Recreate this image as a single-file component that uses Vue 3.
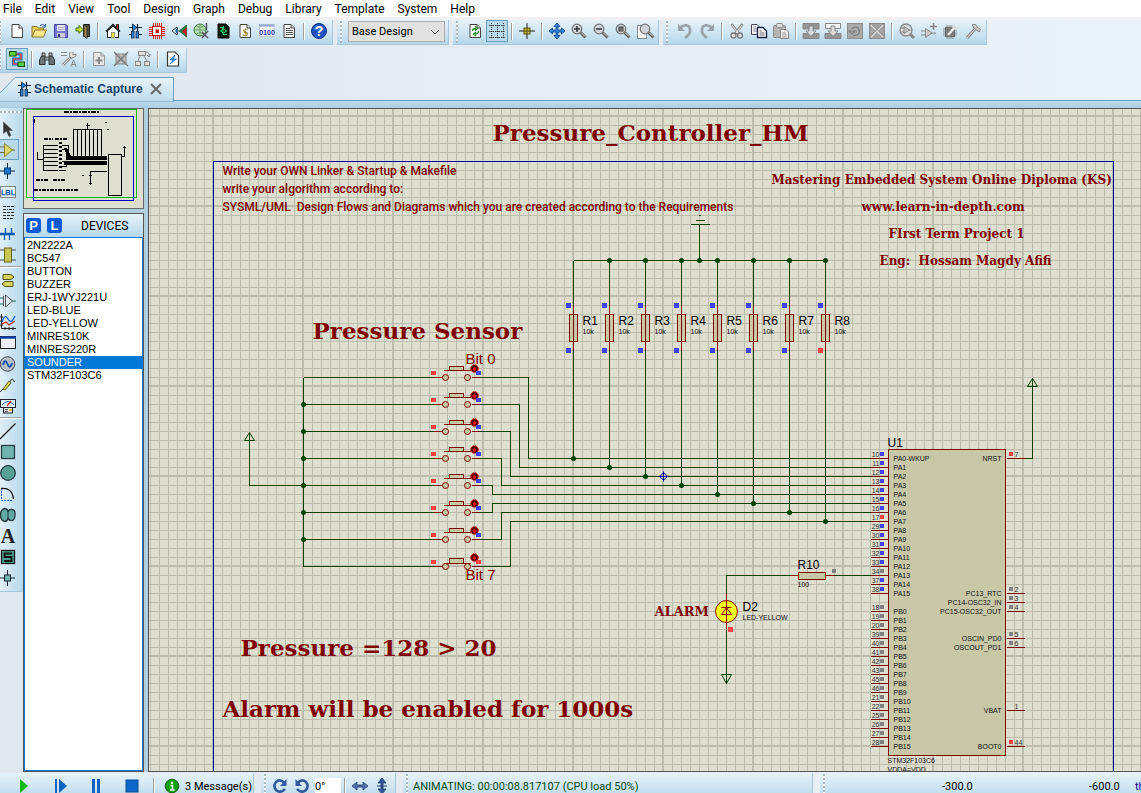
<script setup>
import { ref } from 'vue'

const menus = ['File', 'Edit', 'View', 'Tool', 'Design', 'Graph', 'Debug', 'Library', 'Template', 'System', 'Help']

const page = '<path d="M3 1.500H10L13.500 5V14.500H3Z" fill="#fdfdfd" stroke="#444"/><path d="M10 1.500V5H13.500" fill="#ddd" stroke="#444"/>'
const greyPage = '<path d="M2.500 1.500H10L13.500 5V14.500H2.500Z" fill="#e6e6e6" stroke="#999"/><path d="M10 1.500V5H13.500" fill="none" stroke="#999"/>'
const lens = '<path d="M9.500 9.500L14.500 14.500" stroke="#666" stroke-width="3"/><path d="M10 9.500L14 13.500" stroke="#ccc"/><circle cx="6" cy="6" r="4.800" fill="#cfd5da" stroke="#777" stroke-width="1.300"/>'
const parts = '<path d="M2 4.500H15M2 11.500H5M11 11.500H15" stroke="#123"/><path d="M5.500 1V8L10 4.500Z" fill="#1d7fd8" stroke="#123" stroke-width=".8"/><path d="M10.500 1V8" stroke="#123" stroke-width="1.200"/><rect x="4.500" y="8.500" width="2.500" height="6.500" fill="#2f86dc" stroke="#124" stroke-width=".8"/><rect x="9" y="8.500" width="2.500" height="6.500" fill="#2f86dc" stroke="#124" stroke-width=".8"/>'

const icons = {
  page,
  open: '<path d="M1 14V3.500H6L7 5H12.500V7" fill="#f2d35c" stroke="#8a7430"/><path d="M1 14L4 7H15.500L12.500 14Z" fill="#fbe78b" stroke="#8a7430"/><path d="M9 2.500Q12 0 14 3M14.500 1V4H11.500" fill="none" stroke="#2c5fa0"/>',
  save: '<path d="M1.500 1.500H13L14.500 3V14.500H1.500Z" fill="#7478d4" stroke="#45459a"/><rect x="4" y="2" width="8" height="6" fill="#dfe3f2"/><path d="M5 4.500H11M5 6.500H11" stroke="#aab"/><rect x="4" y="10" width="8" height="4.500" fill="#c9cbd8"/><rect x="5" y="11" width="2" height="3" fill="#35357d"/>',
  exit: '<path d="M8.500 1.500H14.500V13.500H8.500Z" fill="#4b4b3a" stroke="#222"/><path d="M9 2L12 4V15.500L9 13Z" fill="#a8894c" stroke="#333"/><path d="M1 5H4V2.500L8 6.500L4 10.500V8H1Z" fill="#c8e830" stroke="#3f6a10"/>',
  home: '<path d="M2.500 8V14.500H13.500V8L8 3Z" fill="#fff" stroke="#111"/><path d="M1 8.500L8 1.500L15 8.500" fill="none" stroke="#111" stroke-width="1.500"/><path d="M11.500 4V1.500H13.500V6" fill="#e33" stroke="#111"/><rect x="6.500" y="9.500" width="3" height="5" fill="#ffe640" stroke="#997"/>',
  parts,
  chip: '<path d="M4.500 0V3M6.500 0V3M8.500 0V3M10.500 0V3M12.500 0V3M4.500 13V16M6.500 13V16M8.500 13V16M10.500 13V16M12.500 13V16M0 4.500H3M0 6.500H3M0 8.500H3M0 10.500H3M0 12.500H3M13 4.500H16M13 6.500H16M13 8.500H16M13 10.500H16M13 12.500H16" stroke="#e02020"/><rect x="3.500" y="3.500" width="9" height="9" fill="#fff" stroke="#c00000"/><rect x="6.500" y="6.500" width="3.500" height="3.500" fill="#d01010"/>',
  eye: '<path d="M8 8L15.500 2V14Z" fill="#0b8a42" stroke="#104020" stroke-width=".6"/><path d="M11 8L15.500 4.500V13Z" fill="#c82020"/><path d="M1 8L6 4Q8 8 6 12Z" fill="#fff" stroke="#234"/><ellipse cx="5.500" cy="8" rx="1.200" ry="2.200" fill="#1768b0"/>',
  globe: '<circle cx="7" cy="7" r="6" fill="#b9dcae" stroke="#3c7a44"/><path d="M1 7H13M7 1V13M3 3Q7 6 11 3M3 11Q7 8 11 11" fill="none" stroke="#5a9a60" stroke-width=".8"/><path d="M9 9L15 15M15 8L9 15M13.500 0V7" stroke="#556" stroke-width="1.500"/>',
  board: '<path d="M3 1H11L14 4V15H3Z" fill="#021a08" stroke="#000"/><path d="M5 4.500H8V11.500H12M8.500 3V6M5 8H6.500M10.500 8H12" fill="none" stroke="#1fe070"/><circle cx="8.500" cy="8" r="2" fill="none" stroke="#1fe070"/>',
  dollar: page + '<text x="8.500" y="13" font-size="11" font-family="Liberation Serif" font-weight="700" text-anchor="middle" fill="#94831a">$</text>',
  code: '<rect x=".5" y="1.500" width="14.500" height="12" fill="#f4f6fb" stroke="#c0c8d8"/><path d="M0 2.500H15.500" stroke="#8fa3d8" stroke-width="2"/><text x="8" y="12" font-size="7" font-family="Liberation Sans" font-weight="700" text-anchor="middle" fill="#2a3cc8">0100</text>',
  doc: page + '<path d="M5 5.500H9M5 7.500H12M5 9.500H12M5 11.500H12" stroke="#555"/>',
  help: '<circle cx="8" cy="8" r="7.500" fill="#1e52c4" stroke="#0e2f80"/><path d="M2 6Q8 -1 14 6Q8 9 2 6Z" fill="#5a8ae6" opacity=".6"/><text x="8" y="13" font-size="14" font-family="Liberation Sans" font-weight="700" text-anchor="middle" fill="#fff">?</text>',
  refresh: page + '<path d="M5.500 8Q5.500 5.500 9 5.500M8 3.500L10.500 5.500L8 7.500M11.500 8Q11.500 11 8 11M9 9L6.500 11L9 13" fill="none" stroke="#159020" stroke-width="1.300"/>',
  grid: '<path d="M0 2.500H16M0 8.500H16M0 14.500H16M2.500 0V16M8.500 0V16M14.500 0V16" stroke="#333" stroke-dasharray="1 1"/><path d="M1.500 2.500H3.500M7.500 2.500H9.500M13.500 2.500H15.500M1.500 8.500H3.500M7.500 8.500H9.500M13.500 8.500H15.500M1.500 14.500H3.500M7.500 14.500H9.500M13.500 14.500H15.500" stroke="#222"/>',
  origin: '<path d="M8 0V16M0 8H16" stroke="#222"/><rect x="5" y="5" width="6" height="6" fill="#c8b840" stroke="#5c5210"/><path d="M8 4V12M4 8H12" stroke="#5c5210"/>',
  pan: '<path d="M8 0L11 3.500H9V7H12.500V5L16 8L12.500 11V9H9V12.500H11L8 16L5 12.500H7V9H3.500V11L0 8L3.500 5V7H7V3.500H5Z" fill="#2f86e4" stroke="#123c78" stroke-width=".8"/>',
  zoomIn: lens + '<path d="M3 6H9M6 3V9" stroke="#333" stroke-width="1.500"/>',
  zoomOut: lens + '<path d="M3 6H9" stroke="#333" stroke-width="1.500"/>',
  zoomFit: lens + '<rect x="4" y="4" width="4" height="4" fill="#777" stroke="#444"/>',
  zoomArea: '<rect x=".5" y="2.500" width="9" height="13" fill="#fff" stroke="#222" stroke-dasharray="1 1"/><g transform="translate(2 0)">' + lens + '</g>',
  undo: '<path d="M2 5Q11 -1 13 6Q14 11 8 15" fill="none" stroke="#97a2aa" stroke-width="2.600"/><path d="M1 1V8H8Z" fill="#97a2aa"/>',
  redo: '<path d="M14 5Q5 -1 3 6Q2 11 8 15" fill="none" stroke="#97a2aa" stroke-width="2.600"/><path d="M15 1V8H8Z" fill="#97a2aa"/>',
  cut: '<path d="M2.500 1L10 11M13.500 1L6 11" stroke="#888" stroke-width="2.600"/><path d="M3 2L9 10M13 2L7 10" stroke="#eee"/><circle cx="4.500" cy="12.500" r="2.500" fill="#ddd" stroke="#777" stroke-width="1.300"/><circle cx="11" cy="12.500" r="2.500" fill="#ddd" stroke="#777" stroke-width="1.300"/>',
  copy: '<path d="M.5 1.500H6L8.500 4V11.500H.5Z" fill="#fff" stroke="#445"/><path d="M2 4H5M2 6H6M2 8H6" stroke="#889"/><path d="M6.500 4.500H12L15.500 8V14.500H6.500Z" fill="#fff" stroke="#1a2440" stroke-width="1.400"/><path d="M8.500 8H11M8.500 10H13.500M8.500 12H13.500" stroke="#667"/>',
  paste: '<rect x=".5" y="2.500" width="12" height="12" rx="1" fill="#b4b4b4" stroke="#888"/><rect x="3.500" y=".5" width="6" height="4" rx="1" fill="#ddd" stroke="#888"/><path d="M7.500 6.500H13L15.500 9V15.500H7.500Z" fill="#f4f4f4" stroke="#888"/><path d="M9 10H13M9 12H14M9 14H14" stroke="#999"/>',
  blockCopy: '<path d="M0 .5H16V6H0ZM0 10.500H16V15.500H0Z" fill="#959595" stroke="#858585"/><path d="M6 3H10V8H13L8 13.500L3 8H6Z" fill="#dcdcdc" stroke="#777" stroke-width=".8"/>',
  blockMove: '<path d="M.5 .5H15.500V5.500H.5Z" fill="#f4f8fb" stroke="#858585"/><path d="M0 10.500H16V15.500H0Z" fill="#959595" stroke="#858585"/><path d="M6 3H10V8H13L8 13.500L3 8H6Z" fill="#dcdcdc" stroke="#777" stroke-width=".8"/>',
  blockRotate: '<rect x=".5" y=".5" width="15" height="15" fill="#a8a8a8" stroke="#8f8f8f"/><path d="M5 5.500Q11 2 12.500 8Q12 13 6 12.500M2 8H8L5 11Z" fill="none" stroke="#808080" stroke-width="1.200"/>',
  blockDelete: '<rect x=".5" y=".5" width="15" height="15" fill="#a4a4a4" stroke="#8a8a8a"/><path d="M2 2L14 14M14 2L2 14" stroke="#ddd" stroke-width="1.300"/><path d="M3 1.500L14.500 13M1.500 13L13 1.500" stroke="#808080" stroke-width=".7"/>',
  pick: '<path d="M10 10L15 15" stroke="#888" stroke-width="3"/><circle cx="7" cy="7" r="6" fill="#ddd" stroke="#888" stroke-width="1.300"/><path d="M1 5H5M1 9H5M10 7H13M5 3.500V10.500L10.500 7Z" fill="#c4c4c4" stroke="#888"/>',
  make: '<path d="M0 8H4M0 12H4M10 10H15M4.500 5.500V14.500L11 10Z" fill="#ccc" stroke="#888"/><path d="M12.500 0V7M9 3.500H16" stroke="#888" stroke-width="1.500"/>',
  pack: '<rect x="2.500" y="4.500" width="9" height="9" fill="#888" stroke="#666"/><path d="M4 2V16M6 2V16M8 2V16M10 2V16M0 6H14M0 8H14M0 10H14M0 12H14" stroke="#777" stroke-width=".8"/><path d="M5 12L12 4" stroke="#777" stroke-width="4"/><path d="M5 12L12 4" stroke="#eee" stroke-width="2.400"/><path d="M11 1Q9 6 13 6L16 4" fill="none" stroke="#ddd" stroke-width="2"/>',
  hammer: '<path d="M2 15L10 6" stroke="#888" stroke-width="3"/><path d="M2 15L10 6" stroke="#ddd"/><path d="M7 2Q11 0 12 4L15.500 6.500L14 9L9 5Z" fill="#ccc" stroke="#808080"/>',
  wire: '<path d="M7 3H12V8H4.500V13H9" fill="none" stroke="#2070d0" stroke-width="3"/><path d="M7 3H12V8H4.500V13H9" fill="none" stroke="#f05030" stroke-width="1.200"/><rect x=".5" y=".5" width="6.500" height="4.500" fill="#5ad040" stroke="#145010"/><rect x="9" y="11" width="6.500" height="4.500" fill="#5ad040" stroke="#145010"/>',
  find: '<path d="M2.500 5H6V13.500H.5V9ZM10 5H13.500L15.500 9V13.500H10Z" fill="#6a727a" stroke="#333"/><path d="M3 2H6V5H3ZM10 2H13V5H10ZM6 6H10V9H6Z" fill="#a4aeb6" stroke="#444"/>',
  props: '<path d="M0 1.500H6M0 4.500H6" stroke="#888"/><path d="M2 14L10 6" stroke="#888" stroke-width="3"/><path d="M2 14L10 6" stroke="#eee"/><path d="M9 1Q7 7 12 7L15 5L15 3L12 4L12 1" fill="#ddd" stroke="#888"/><path d="M10 15.500L12.500 9L15 15.500M11 13.500H14" fill="none" stroke="#888"/>',
  addSheet: greyPage + '<path d="M8 6V13M4.500 9.500H11.500" stroke="#888" stroke-width="2"/>',
  delSheet: '<rect x="3" y="3" width="10" height="10" fill="#c8c8c8" stroke="#888"/><path d="M1 1L15 15M15 1L1 15" stroke="#777" stroke-width="1.200"/><path d="M3 6H13M3 10H13M6 3V13M10 3V13" stroke="#888" stroke-width=".7"/>',
  exitSheet: '<rect x="3.500" y=".5" width="7" height="4" fill="#ddd" stroke="#888"/><rect x=".5" y="10.500" width="5" height="4" fill="#ddd" stroke="#888"/><rect x="9.500" y="10.500" width="5" height="4" fill="#ddd" stroke="#888"/><path d="M5 5L3 10M9 5L12 10M11 1Q15 1 14 6M12 4L14 6L16 3" fill="none" stroke="#888"/>',
  erc: '<path d="M2.500 1H10L13.500 4.500V15H2.500Z" fill="#fdfdfd" stroke="#333" stroke-width="1.200"/><path d="M10 4L5 9H8L5 13L11.500 8H8.500Z" fill="#2e9af0" stroke="#1565b8" stroke-width=".6"/>',

  arrow: '<path d="M3.500 1V12.500L6.500 10L9 15.500L11 14.500L8.700 9.500H12.500Z" fill="#333" stroke="#555" stroke-width=".6"/>',
  opamp: '<path d="M0 5H5M0 10.500H5M12 8H15" stroke="#6a6a3a"/><path d="M4.500 1.500V14.500L12.500 8Z" fill="#dcd76a" stroke="#8c8630"/>',
  junction: '<path d="M7.500 0V16M0 8H15" stroke="#123"/><rect x="4.500" y="5" width="6" height="6" fill="#1b74cc" stroke="#0c3e78"/>',
  label: '<rect x=".5" y="2.500" width="15" height="11" fill="#e4f2fa" stroke="#222" stroke-dasharray="1 1"/><text x="8" y="11" font-size="8" font-family="Liberation Sans" text-anchor="middle" fill="#0a58a8" stroke="#0a58a8" stroke-width=".3">LBL</text>',
  script: '<path d="M3 1.500H14M3 4.500H8M9 4.500H14M3 7.500H14M3 10.500H14M3 13.500H9M10 13.500H14" stroke="#333" stroke-dasharray="3 1"/>',
  bus: '<path d="M0 8H15" stroke="#0a5cb0" stroke-width="2.500"/><path d="M5.500 2V8M11.500 2V8M4.500 8V14M9.500 8V14" stroke="#0a5cb0" stroke-width="1.300"/>',
  subckt: '<path d="M0 3H4M0 13H4M11 3H16M11 13H16" stroke="#444"/><rect x="4.500" y="1" width="7" height="14" fill="#c9c552" stroke="#68651c"/>',
  terminal: '<path d="M3 2.500H11L14 5L11 7.500H3Z" fill="#d7d25a" stroke="#555220"/><path d="M13 9.500H5L2 12L5 14.500H13Z" fill="#d7d25a" stroke="#555220"/>',
  pin: '<path d="M0 5H3M0 11H3M12 8H16" stroke="#19705c"/><path d="M5.500 2V14L12.500 8Z" fill="#dceaf2" stroke="#555"/><path d="M3.500 3V13" stroke="#555"/>',
  graph: '<path d="M1.500 0V14.500H16M0 3H3M0 7H3M0 11H3M5 13V16M9 13V16M13 13V16" stroke="#222" fill="none"/><path d="M2 8Q5 -1 8 5T15 2" fill="none" stroke="#1560c0" stroke-width="1.300"/><path d="M2 10L6 8L9 11L15 7" fill="none" stroke="#d02818" stroke-width="1.300"/>',
  popup: '<rect x=".5" y="1.500" width="15" height="12" fill="#eef0f3" stroke="#222"/><path d="M0 2.500H16" stroke="#153e9c" stroke-width="2.500"/>',
  generator: '<circle cx="7.500" cy="8" r="7.300" fill="#b4bcc4" stroke="#445"/><path d="M3 9Q5 2 7.500 8T12 7" fill="none" stroke="#1550b0" stroke-width="1.800"/>',
  probe: '<path d="M0 15L4 11M10 5Q12 0 13 3T15 4" fill="none" stroke="#333"/><path d="M3 12L9 4L11 6L5 13Z" fill="#e4e052" stroke="#55521a"/>',
  meter: '<rect x=".5" y="1.500" width="15" height="8" fill="#dff0fa" stroke="#223"/><path d="M2 7Q8 0 14 7" fill="none" stroke="#2068c0"/><path d="M7 8L11 3" stroke="#d02818" stroke-width="1.300"/><rect x="3.500" y="9.500" width="9" height="5.500" fill="#e8e8e8" stroke="#223"/><circle cx="10.500" cy="12" r="1.300" fill="#e8b800"/><path d="M5 11.500H8M5 13.500H8" stroke="#555"/>',
  line: '<path d="M0 16L15.500 .5" stroke="#222" stroke-width="1.300"/>',
  box: '<rect x="1.500" y="1.500" width="13" height="13" fill="#6fb4ae" stroke="#2a3c44" stroke-width="1.300"/>',
  circle: '<circle cx="8" cy="8" r="7.300" fill="#589f98" stroke="#2a3c44" stroke-width="1.300"/>',
  arc: '<path d="M1.500 2V14.500H13" fill="none" stroke="#1560c8" stroke-dasharray="2 1"/><path d="M1 2.500Q12 1 13.500 13" fill="none" stroke="#111" stroke-width="1.300"/>',
  path: '<path d="M5 1.500Q8 2 8 5Q9 2 12 2.500Q15.500 3 15 8Q15 13 12 13.500Q9 14 8 11Q8 14 5 14.500Q.5 14 .5 8Q.5 2 5 1.500Z" fill="#5fa9a2" stroke="#26343a" stroke-width="1.300"/><path d="M8 4V12" stroke="#26343a"/>',
  text: '<text x="8" y="15" font-size="20" font-family="Liberation Serif" font-weight="700" text-anchor="middle" fill="#222">A</text>',
  symbol: '<rect x="1.500" y="1.500" width="13" height="13" fill="#4f9c92" stroke="#111" stroke-width="1.300"/><path d="M12 4.500H4.500V8H11.500V12H4" fill="none" stroke="#111" stroke-width="1.800"/>',
  marker: '<path d="M7.500 0V16M0 8H15" stroke="#223"/><rect x="4.500" y="5" width="6" height="6" fill="#6fb4ae" stroke="#223"/>',

  play: '<path d="M4 1L12 8L4 15Z" fill="#12b812"/>',
  step: '<path d="M3 1H5V15H3ZM7 1L15 8L7 15Z" fill="#0b62c0"/>',
  pause: '<path d="M4 1H7V15H4ZM9 1H12V15H9Z" fill="#0b62c0"/>',
  stop: '<rect x="2" y="2" width="12" height="12" fill="#0e68cc" stroke="#0a4a94"/>',
  info: '<circle cx="8" cy="8" r="6.800" fill="#12a012" stroke="#0b600b"/><circle cx="8" cy="4.700" r="1.200" fill="#fff"/><path d="M6.500 7.500H8.500V12M6 12H10.500" stroke="#fff" stroke-width="1.600" fill="none"/>',
  cw: '<path d="M12 4.500Q8 .5 4 4Q.5 8.500 4.500 12.500Q9 15.500 13 11" fill="none" stroke="#33589c" stroke-width="2.600"/><path d="M14.500 1V8H8Z" fill="#33589c"/>',
  ccw: '<path d="M4 4.500Q8 .5 12 4Q15.500 8.500 11.500 12.500Q7 15.500 3 11" fill="none" stroke="#33589c" stroke-width="2.600"/><path d="M1.500 1V8H8Z" fill="#33589c"/>',
  flipH: '<path d="M0 8L5 4V7H11V4L16 8L11 12V9H5V12Z" fill="#5374ae" stroke="#1f3a70" stroke-width=".8"/>',
  flipV: '<path d="M8 0L12 5H9V11H12L8 16L4 11H7V5H4Z" fill="#33589c" stroke="#1f3a70" stroke-width=".8"/><path d="M3 8H13" stroke="#1f3a70"/>'
}

const fileTools = ['page', 'open', 'save', 'exit', '|', 'home', 'parts', 'chip', 'eye', 'globe', 'board', 'dollar', 'code', 'doc', '|', 'help']
const viewTools = ['refresh', 'grid', '|', 'origin', '|', 'pan', 'zoomIn', 'zoomOut', 'zoomFit', 'zoomArea']
const editTools = ['undo', 'redo', '|', 'cut', 'copy', 'paste', '|', 'blockCopy', 'blockMove', 'blockRotate', 'blockDelete', '|', 'pick', 'make', 'pack', 'hammer']
const designTools = ['wire', '|', 'find', 'props', '|', 'addSheet', 'delSheet', 'exitSheet', '|', 'erc']
const modeTools = ['arrow', 'opamp', 'junction', 'label', 'script', 'bus', 'subckt', '|', 'terminal', 'pin', 'graph', 'popup', 'generator', 'probe', 'meter', '|', 'line', 'box', 'circle', 'arc', 'path', 'text', 'symbol', 'marker']
const simTools = ['play', 'step', 'pause', 'stop']
const active = ['grid', 'wire', 'opamp']

const devices = ['2N2222A', 'BC547', 'BUTTON', 'BUZZER', 'ERJ-1WYJ221U', 'LED-BLUE', 'LED-YELLOW', 'MINRES10K', 'MINRES220R', 'SOUNDER', 'STM32F103C6']
const selected = ref('SOUNDER')
const angle = ref('0°')

// Schematic geometry, in sheet units
const turnX = [528, 519, 510, 501, 492, 492, 501, 510]
const keys = turnX.map((tx, i) => ({ y: 377 + 27 * i, tx, py: 458 + 9 * i, down: i === 7 }))
const pulls = Array.from({ length: 8 }, (_, i) => ({ x: 573 + 36 * i, py: 458 + 9 * i, name: 'R' + (i + 1), low: i === 7 }))

const BLUE = '#4040ff', RED = '#ff4040', GREY = '#808080'
const aNums = [10, 11, 12, 13, 14, 15, 16, 17, 29, 30, 31, 32, 33, 34, 37, 38]
const bNums = [18, 19, 20, 39, 40, 41, 42, 43, 45, 46, 21, 22, 25, 26, 27, 28]
const leftPins = [
  ...aNums.map((n, i) => ({ n, y: 458 + 9 * i, name: i ? 'PA' + i : 'PA0-WKUP', c: n === 17 ? RED : n === 34 ? GREY : BLUE })),
  ...bNums.map((n, i) => ({ n, y: 611 + 9 * i, name: 'PB' + i, c: GREY }))
]
const rightPins = [
  { n: 7, y: 458, name: 'NRST', c: RED },
  { n: 2, y: 593, name: 'PC13_RTC', c: GREY },
  { n: 3, y: 602, name: 'PC14-OSC32_IN', c: GREY },
  { n: 4, y: 611, name: 'PC15-OSC32_OUT', c: GREY },
  { n: 5, y: 638, name: 'OSCIN_PD0', c: GREY },
  { n: 6, y: 647, name: 'OSCOUT_PD1', c: GREY },
  { n: 1, y: 710, name: 'VBAT', c: 'none' },
  { n: 44, y: 746, name: 'BOOT0', c: RED }
]
const minor = Array.from({ length: 9 }, (_, i) => 10 + 9 * i)
const nodes = [
  ...[404, 431, 458, 485, 512, 539].map(y => [303, y]),
  ...[609, 645, 681, 699, 717, 753, 789, 825].map(x => [x, 260]),
  ...pulls.map(p => [p.x, p.py])
]
</script>

<template>
  <div class="app">
    <nav class="menu">
      <button v-for="m in menus" :key="m" type="button">{{ m }}</button>
    </nav>

    <div class="bars">
      <div class="bar file">
        <template v-for="(t, i) in fileTools" :key="i">
          <span v-if="t === '|'" class="sep"></span>
          <button v-else type="button" class="tool" :aria-label="t"><svg viewBox="0 0 16 16" v-html="icons[t]"></svg></button>
        </template>
      </div>
      <div class="bar variant">
        <select aria-label="Design variant"><option>Base Design</option></select>
        <svg class="chevron" viewBox="0 0 10 6"><path d="M1 1L5 5L9 1" fill="none" stroke="#555" /></svg>
      </div>
      <div class="bar grip view">
        <template v-for="(t, i) in viewTools" :key="i">
          <span v-if="t === '|'" class="sep"></span>
          <button v-else type="button" class="tool" :class="{ on: active.includes(t) }" :aria-label="t"><svg viewBox="0 0 16 16" v-html="icons[t]"></svg></button>
        </template>
      </div>
      <div class="bar grip edit">
        <template v-for="(t, i) in editTools" :key="i">
          <span v-if="t === '|'" class="sep"></span>
          <button v-else type="button" class="tool" :aria-label="t"><svg viewBox="0 0 16 16" v-html="icons[t]"></svg></button>
        </template>
      </div>
    </div>
    <div class="bars second">
      <div class="bar design">
        <template v-for="(t, i) in designTools" :key="i">
          <span v-if="t === '|'" class="sep"></span>
          <button v-else type="button" class="tool" :class="{ on: active.includes(t) }" :aria-label="t"><svg viewBox="0 0 16 16" v-html="icons[t]"></svg></button>
        </template>
      </div>
    </div>

    <div class="tabs">
      <div class="tab">
        <svg class="tab-shape" viewBox="0 0 174 25">
          <defs><linearGradient id="tabfill" x1="0" y1="0" x2="0" y2="1"><stop offset="0" stop-color="#e6f2f9" /><stop offset="1" stop-color="#bddcee" /></linearGradient></defs>
          <path d="M-2 25V18L15 .5H173.500V25Z" fill="url(#tabfill)" stroke="#6a9fbe" />
        </svg>
        <svg class="tab-icon" viewBox="0 0 16 16" v-html="icons.parts"></svg>
        <span class="tab-name">Schematic Capture</span>
        <button type="button" class="close" aria-label="Close tab"><svg viewBox="0 0 12 12"><path d="M1 1L11 11M11 1L1 11" stroke="#666" stroke-width="2" /></svg></button>
      </div>
      <div class="tab-rest"></div>
    </div>
    <div class="band"></div>

    <main class="main">
      <div class="modes">
        <template v-for="(t, i) in modeTools" :key="i">
          <span v-if="t === '|'" class="hsep"></span>
          <button v-else type="button" class="mode" :class="{ on: active.includes(t) }" :aria-label="t"><svg viewBox="0 0 16 16" v-html="icons[t]"></svg></button>
        </template>
      </div>

      <aside class="side">
        <div class="overview">
          <svg viewBox="24 109 119 99" shape-rendering="crispEdges">
            <g fill="none" stroke="#000">
              <path d="M73.500 157V129.500H101.500V157M77.500 130V157M81.500 130V157M85.500 130V157M89.500 130V157M93.500 130V157M97.500 130V157M87.500 129V123M86 125H90" />
              <path d="M37.500 152V159.500H43M43.500 145V170.500M43.500 145.500H58M43.500 149.500H58M43.500 153.500H58M43.500 157.500H58M43.500 161.500H58M43.500 165.500H58M43.500 170.500H58M62 145.500H68.500V157M62 149.500H66.500V160M62 161.500H66M62 166.500H66.500V163M62 170.500H66" />
              <path d="M60.500 142V171" stroke-width="3" stroke-dasharray="2 2" />
              <path d="M67 158H107M64 163H107" stroke-width="4" />
              <path d="M65 148L70 157" stroke-width="3" />
              <rect x="108.500" y="154.500" width="13" height="41" />
              <path d="M122 156.500H124.500V146M123 147H126M107 171.500H90.500V185M89 175.500H92M89 183.500H92" />
              <path d="M64 112H100" stroke-width="2" stroke-dasharray="5 1 2 1" />
              <path d="M44 138.500H53M55 138.500H67M36 179.500H48M53 179.500H65M34 189.500H79" stroke-width="2" stroke-dasharray="4 1 2 1" />
              <path d="M105 122H107M107 129H109M82 175H84M34 119V123" />
            </g>
            <rect x="26.500" y="109.500" width="110" height="88" fill="none" stroke="#00b400" />
            <rect x="33.500" y="116.500" width="100" height="84" fill="none" stroke="#0000c8" />
          </svg>
        </div>
        <section class="devices">
          <header>
            <button type="button" class="pl">P</button>
            <button type="button" class="pl">L</button>
            <span class="dev-title">DEVICES</span>
          </header>
          <ul>
            <li v-for="d in devices" :key="d" :class="{ sel: d === selected }" @click="selected = d">{{ d }}</li>
          </ul>
        </section>
      </aside>

      <div class="sheet">
        <svg class="schematic">
          <defs>
            <pattern id="dots" x="63" y="6" width="90" height="90" patternUnits="userSpaceOnUse">
              <rect width="90" height="90" fill="#dfdfcf" />
              <g fill="#bdbdad">
                <rect width="2" height="90" />
                <rect width="90" height="2" />
                <rect v-for="m in minor" :key="'v' + m" :x="m" y="0" width="1" height="90" />
                <rect v-for="m in minor" :key="'h' + m" x="0" :y="m" width="90" height="1" />
              </g>
            </pattern>
          </defs>
          <rect width="100%" height="100%" fill="url(#dots)" />

          <g transform="translate(-148.500 -108.500)">
            <rect x="213" y="161" width="900" height="800" fill="none" stroke="#0000a0" shape-rendering="crispEdges" />

            <g class="wire">
              <path d="M303 377V566M303 485H249V431M573 260H825M699 260V224M690 224H709M695 220H704M698 215H700M1024 458H1032V377M870 575H834M789 575H726V593M726 629V683" />
              <path v-for="k in keys" :key="k.y" :d="`M303 ${k.y}H433M479 ${k.y}H${k.tx}V${k.py}H870`" />
              <path v-for="p in pulls" :key="p.x" :d="`M${p.x} 260V305M${p.x} 350V${p.py}`" />
            </g>
            <g fill="none" stroke="#004000">
              <path d="M249 432L244 440H254ZM1032 378L1027 386H1037ZM726 683L721 674H731Z" />
            </g>
            <circle v-for="(n, i) in nodes" :key="i" :cx="n[0]" :cy="n[1]" r="2.500" fill="#004000" />
            <path d="M663 472L667 476L663 480L659 476ZM663 471V481M658 476H668" fill="none" stroke="#0000a0" />

            <g v-for="k in keys" :key="'k' + k.y" :transform="`translate(0 ${k.y})`">
              <g class="part" shape-rendering="crispEdges">
                <path d="M433 0H442M471 0H479" />
                <rect x="449" :y="k.down ? -8 : -11" width="14" :height="k.down ? 5 : 4" />
                <path :d="k.down ? 'M443 -3H470' : 'M443 -7H470'" />
              </g>
              <g class="part"><circle cx="445" cy="0" r="3" /><circle cx="467" cy="0" r="3" /></g>
              <circle cx="474" cy="-9" r="3.800" fill="#500000" stroke="#f00000" stroke-dasharray="2 1" />
              <path d="M474 -11L476 -8.500L474 -6L472 -8.500Z" fill="#ff0000" />
              <rect x="430.500" y="-6.500" width="5" height="4" :fill="RED" />
              <rect x="475.500" y="-6.500" width="5" height="4" :fill="k.down ? RED : BLUE" />
            </g>

            <g v-for="p in pulls" :key="'r' + p.x" :transform="`translate(${p.x} 0)`">
              <path class="part" shape-rendering="crispEdges" d="M0 305V350M-4 314H4V341H-4Z" />
              <rect x="-7.500" y="302.500" width="5" height="5" :fill="BLUE" />
              <rect x="-7.500" y="347.500" width="5" height="5" :fill="p.low ? RED : BLUE" />
              <text class="ref" x="9" y="324">{{ p.name }}</text>
              <text class="tiny" x="9" y="333">10k</text>
            </g>

            <g class="part" shape-rendering="crispEdges">
              <path d="M789 575H834" />
              <rect x="798" y="572" width="27" height="7" />
            </g>
            <rect x="831.500" y="568.500" width="4" height="4" :fill="GREY" />
            <text class="ref" x="797" y="568">R10</text>
            <text class="tiny" x="797" y="586">100</text>

            <circle cx="726" cy="611" r="11" fill="#ffff20" stroke="#800000" />
            <path d="M726 593V629M721 607H731M726 607L721 614H731Z" fill="none" stroke="#800000" />
            <rect x="727.500" y="626.500" width="5" height="5" :fill="RED" />
            <text class="ref" x="742" y="610">D2</text>
            <text class="tiny" x="742" y="619">LED-YELLOW</text>

            <rect class="part" shape-rendering="crispEdges" x="888" y="449" width="117" height="306" />
            <text class="ref" x="887" y="446">U1</text>
            <text class="tiny" x="887" y="762">STM32F103C6</text>
            <text class="tiny" x="887" y="771">VDDA=VDD</text>
            <g v-for="p in leftPins" :key="p.name">
              <path class="lead" :d="`M870 ${p.y}H888`" />
              <rect x="879.500" :y="p.y - 6.5" width="4" height="4" :fill="p.c" />
              <text class="tiny num" x="879" :y="p.y - 2" text-anchor="end">{{ p.n }}</text>
              <text class="tiny" x="893" :y="p.y + 2">{{ p.name }}</text>
            </g>
            <g v-for="p in rightPins" :key="p.name">
              <path class="lead" :d="`M1006 ${p.y}H1024`" />
              <rect x="1008.500" :y="p.y - 6.5" width="4" height="4" :fill="p.c" />
              <text class="tiny num" x="1014" :y="p.y - 2">{{ p.n }}</text>
              <text class="tiny" x="1001" :y="p.y + 2" text-anchor="end">{{ p.name }}</text>
            </g>

            <g class="note">
              <text x="222" y="174">Write your OWN Linker &amp; Startup &amp; Makefile</text>
              <text x="222" y="192">write your algorithm according to:</text>
              <text x="222" y="210">SYSML/UML&nbsp; Design Flows and Diagrams which you are created according to the Requirements</text>
            </g>
            <g class="slab big">
              <text x="492" y="140">Pressure_Controller_HM</text>
              <text x="312" y="338">Pressure Sensor</text>
              <text x="240" y="655">Pressure =128 &gt; 20</text>
              <text x="222" y="716">Alarm will be enabled for 1000s</text>
            </g>
            <g class="slab small">
              <text x="771" y="183">Mastering Embedded System Online Diploma (KS)</text>
              <text x="861" y="210">www.learn-in-depth.com</text>
              <text x="888" y="237">FIrst Term Project 1</text>
              <text x="879" y="264">Eng:&nbsp; Hossam Magdy Afifi</text>
            </g>
            <text class="slab alarm" x="654" y="615">ALARM</text>
            <g class="bit"><text x="465" y="363">Bit 0</text><text x="465" y="579">Bit 7</text></g>
          </g>
        </svg>
      </div>
    </main>

    <footer class="status">
      <div class="sbar sim">
        <button v-for="t in simTools" :key="t" type="button" class="simbtn" :aria-label="t"><svg viewBox="0 0 16 16" v-html="icons[t]"></svg></button>
        <span class="sep"></span>
        <svg class="info" viewBox="0 0 16 16" v-html="icons.info"></svg>
        <span>3 Message(s)</span>
      </div>
      <div class="sbar grip orient">
        <button type="button" class="tool" aria-label="Rotate clockwise"><svg viewBox="0 0 16 16" v-html="icons.cw"></svg></button>
        <button type="button" class="tool" aria-label="Rotate anticlockwise"><svg viewBox="0 0 16 16" v-html="icons.ccw"></svg></button>
        <input v-model="angle" aria-label="Rotation angle" />
        <span class="sep"></span>
        <button type="button" class="tool" aria-label="Mirror horizontally"><svg viewBox="0 0 16 16" v-html="icons.flipH"></svg></button>
        <button type="button" class="tool" aria-label="Mirror vertically"><svg viewBox="0 0 16 16" v-html="icons.flipV"></svg></button>
      </div>
      <div class="sbar grip anim">ANIMATING: 00:00:08.817107 (CPU load 50%)</div>
      <div class="sbar grip coords">
        <span class="x">-300.0</span>
        <span class="y">-600.0</span>
        <span class="unit">th</span>
      </div>
    </footer>
  </div>
</template>

<style>
body { margin: 0; }
</style>

<style scoped>
.app {
  display: flex;
  flex-direction: column;
  height: 100vh;
  overflow: hidden;
  background: linear-gradient(90deg, #e1e7ee, #eaf2f9);
  font-family: Roboto, "Open Sans", sans-serif;
  font-size: 12px;
  color: #000;
}
button { margin: 0; padding: 0; border: 0; background: none; font: inherit; color: inherit; }
svg { display: block; }

.menu {
  flex: none;
  display: flex;
  gap: 13px;
  height: 17px;
  padding-left: 3px;
  background: #fff;
  border-bottom: 3px solid #f0f0f0;
}
.menu button { line-height: 18px; }

.bars { flex: none; display: flex; gap: 4px; height: 25px; }
.second { margin: 3px 0 4px; }
.bar {
  box-sizing: border-box;
  position: relative;
  display: flex;
  align-items: center;
  height: 25px;
  padding: 0 2px 2px 6px;
  background: linear-gradient(#e6f2f9, #cbe3f1 60%, #b4d6e8);
  border-right: 1px solid #a6c8da;
  border-bottom: 1px solid #a6c8da;
}
.file::before, .design::before, .variant::before, .grip::before {
  content: "";
  position: absolute;
  top: 1px;
  bottom: 1px;
  left: 3px;
  width: 2px;
  background: repeating-linear-gradient(#a4b8c6 0 2px, #fff 2px 4px);
}
.file::before, .design::before { left: 0; width: 1px; }
.variant { padding-left: 11px; padding-right: 3px; }
.view { padding-left: 11px; }
.edit { padding-left: 11px; }
.design { padding-right: 2px; }
.tool { box-sizing: border-box; flex: none; width: 22px; height: 22px; display: grid; place-items: center; }
.tool svg { width: 16px; height: 16px; overflow: visible; }
.on { border: 1px solid #6a9fbe; background: #b9d8ea; }
.sep { flex: none; width: 1px; height: 17px; margin: 0 3px; background: #a0a0a0; border-right: 1px solid #fff; }
.variant select {
  appearance: none;
  box-sizing: border-box;
  width: 97px;
  height: 21px;
  padding: 0 3px;
  border: 1px solid #adadad;
  border-radius: 0;
  background: #e1e1e1;
  font-family: Roboto, sans-serif;
  font-size: 11px;
  color: #000;
}
.chevron { position: absolute; right: 8px; top: 9px; width: 10px; height: 6px; }

.tabs { flex: none; display: flex; height: 24px; }
.tab { position: relative; flex: none; display: flex; align-items: center; width: 174px; padding-left: 16px; box-sizing: border-box; }
.tab-shape { position: absolute; left: 0; top: 0; width: 174px; height: 25px; }
.tab-icon { position: relative; width: 16px; height: 16px; margin-right: 2px; }
.tab-name { position: relative; width: 116px; font: bold 12px "Liberation Sans", Arial, sans-serif; color: #1c456e; white-space: nowrap; }
.close { position: relative; }
.close svg { width: 12px; height: 12px; }
.tab-rest { flex: 1; border-bottom: 1px solid #6a9fbe; }
.band { flex: none; height: 7px; background: linear-gradient(#bddcee, #abcee2); }

.main { flex: 1; min-height: 0; display: flex; }
.modes {
  flex: none;
  align-self: flex-start;
  display: flex;
  flex-direction: column;
  box-sizing: border-box;
  width: 23px;
  padding: 10px 0 3px;
  border-bottom: 1px solid #a6c8da;
  background: linear-gradient(90deg, #e0eff8, #b6d8ea);
  position: relative;
}
.modes::before { content: ""; position: absolute; top: 3px; left: 0; right: 1px; height: 2px; background: repeating-linear-gradient(90deg, #a4b8c6 0 2px, #fff 2px 4px); }
.mode { box-sizing: border-box; width: 19px; height: 21px; display: flex; align-items: center; }
.mode svg { width: 16px; height: 16px; flex: none; overflow: visible; }
.mode.on { border-left: 0; }
.hsep { height: 1px; margin: 1px 2px 1px 0; background: #a0a0a0; border-bottom: 1px solid #fff; }

.side { flex: none; display: flex; flex-direction: column; gap: 4px; width: 121px; margin-right: 4px; background: #b0d0e2; box-shadow: 4px 0 0 #b0d0e2; }
.overview { flex: none; height: 99px; border: 1px solid #666; background: #dfdfcf; }
.overview svg { width: 119px; height: 99px; }
.devices { flex: 1; min-height: 0; display: flex; flex-direction: column; border: 1px solid #555; }
.devices header { display: flex; align-items: center; gap: 6px; height: 23px; padding-left: 2px; background: linear-gradient(#e6f2f9, #b6d8ea); }
.pl { width: 15px; height: 15px; border-radius: 3px; background: #0b5bd8; color: #fff; font: bold 13px/15px "Liberation Sans", Arial, sans-serif; }
.dev-title { margin-left: 13px; }
ul { flex: 1; margin: 0; padding: 1px 0 0; border: 1px solid #0078d7; background: #fff; list-style: none; font-family: "Liberation Sans", Arial, sans-serif; font-size: 11px; }
li { height: 13px; padding-left: 2px; line-height: 13px; }
.sel { background: #0078d7; color: #fff; }

.sheet { flex: 1; min-width: 0; border: 1px solid #555; border-right: 0; }
.schematic { width: 100%; height: 100%; }
.wire { fill: none; stroke: #004000; shape-rendering: crispEdges; }
.part { fill: #c8c8a8; stroke: #800000; }
.lead { stroke: #800000; shape-rendering: crispEdges; }
text { font-family: "Liberation Sans", Arial, sans-serif; }
.ref { font-size: 12px; fill: #000; }
.tiny { font-size: 7px; fill: #101010; }
.num { fill: #303030; }
.note text { font-family: Roboto, "Open Sans", sans-serif; font-size: 12px; font-weight: 500; fill: #800000; }
.slab, .slab text { font-family: "DejaVu Serif", serif; font-weight: bold; fill: #800000; }
.big text { font-size: 23px; }
.small text { font-size: 12px; }
.alarm { font-size: 13px; }
.bit text { font-size: 15px; fill: #800000; }

.status { flex: none; display: flex; align-items: flex-start; gap: 7px; height: 20px; margin-top: 1px; overflow: hidden; font-size: 11px; }
.sbar {
  position: relative;
  flex: none;
  display: flex;
  align-items: center;
  box-sizing: border-box;
  height: 26px;
  background: linear-gradient(#e6f2f9, #cbe3f1 60%, #b4d6e8);
  border-right: 1px solid #a6c8da;
  white-space: nowrap;
}
.sim { width: 254px; padding-left: 6px; }
.simbtn { flex: none; width: 36px; }
.simbtn svg { width: 16px; height: 16px; margin: 0 auto; }
.sim .sep { margin: 0 9px 0 3px; }
.info { flex: none; width: 16px; height: 16px; margin-right: 5px; }
.orient { width: 135px; padding-left: 8px; }
.orient input { box-sizing: border-box; flex: none; width: 26px; height: 17px; padding: 0; margin: 0 0 0 2px; border: 0; background: #fff; font: inherit; }
.anim { width: 410px; padding-left: 10px; color: #0a4a20; }
.coords { flex: 1; padding-left: 122px; }
.x, .y { flex: none; width: 147px; }
.y { width: 46px; }
.unit { color: #0000a0; }
</style>
